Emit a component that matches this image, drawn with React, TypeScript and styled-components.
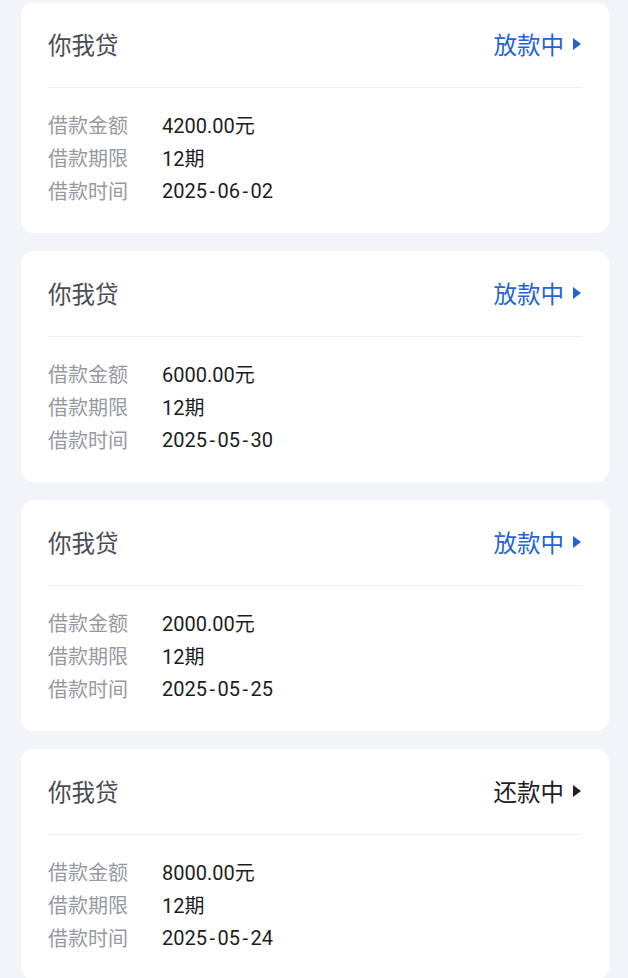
import React from "react";
import styled, { createGlobalStyle } from "styled-components";

const GlobalStyle = createGlobalStyle`
  html, body {
    margin: 0;
    padding: 0;
    background: #f2f4f9;
  }
  body {
    font-family: Roboto, "Noto Sans CJK SC", sans-serif;
  }
`;

const Page = styled.div`
  display: flex;
  flex-direction: column;
  gap: 18px;
  padding: 2px 19px 0 21px;
  height: 978px;
  overflow: hidden;
  box-sizing: border-box;
`;

const Card = styled.div`
  background: #ffffff;
  border-radius: 13px;
  padding: 0 27px;
  flex-shrink: 0;
`;

const Header = styled.div`
  height: 86px;
  box-sizing: border-box;
  padding-bottom: 2px;
  display: flex;
  align-items: center;
  justify-content: space-between;
  border-bottom: 1px solid #eef0f3;
`;

const Title = styled.div`
  font-size: 23.5px;
  color: #4a4c52;
  font-family: "Noto Sans CJK SC", sans-serif;
`;

const Status = styled.div<{ $tone: "blue" | "dark" }>`
  display: flex;
  align-items: center;
  gap: 9px;
  margin-right: 1px;
  font-size: 23.5px;
  font-family: "Noto Sans CJK SC", sans-serif;
  color: ${(p) => (p.$tone === "blue" ? "#2563d4" : "#1f2023")};
`;

const Arrow = styled.svg`
  width: 8px;
  height: 12px;
  flex-shrink: 0;
`;

const Body = styled.div`
  padding: 20px 0 26px;
  display: flex;
  flex-direction: column;
`;

const Row = styled.div`
  display: flex;
  align-items: center;
  height: 33px;
  font-size: 20px;
`;

const Label = styled.div`
  width: 114px;
  color: #97999f;
  font-family: "Noto Sans CJK SC", sans-serif;
`;

const Value = styled.div`
  color: #1b1c1f;
`;

const Dash = styled.span`
  margin: 0 2.5px;
`;

type Loan = { amount: string; date: string; status: string; tone: "blue" | "dark" };

const loans: Loan[] = [
  { amount: "4200.00元", date: "2025-06-02", status: "放款中", tone: "blue" },
  { amount: "6000.00元", date: "2025-05-30", status: "放款中", tone: "blue" },
  { amount: "2000.00元", date: "2025-05-25", status: "放款中", tone: "blue" },
  { amount: "8000.00元", date: "2025-05-24", status: "还款中", tone: "dark" },
];

function DateText({ value }: { value: string }) {
  const parts = value.split("-");
  return (
    <>
      {parts.map((p, i) => (
        <React.Fragment key={i}>
          {i > 0 && <Dash>-</Dash>}
          {p}
        </React.Fragment>
      ))}
    </>
  );
}

export default function App() {
  return (
    <>
      <GlobalStyle />
      <Page>
        {loans.map((l, i) => (
          <Card key={i}>
            <Header>
              <Title>你我贷</Title>
              <Status $tone={l.tone}>
                {l.status}
                <Arrow viewBox="0 0 8 12">
                  <path d="M0 0 L8 6 L0 12 Z" fill="currentColor" />
                </Arrow>
              </Status>
            </Header>
            <Body>
              <Row>
                <Label>借款金额</Label>
                <Value>{l.amount}</Value>
              </Row>
              <Row>
                <Label>借款期限</Label>
                <Value>12期</Value>
              </Row>
              <Row>
                <Label>借款时间</Label>
                <Value>
                  <DateText value={l.date} />
                </Value>
              </Row>
            </Body>
          </Card>
        ))}
      </Page>
    </>
  );
}
